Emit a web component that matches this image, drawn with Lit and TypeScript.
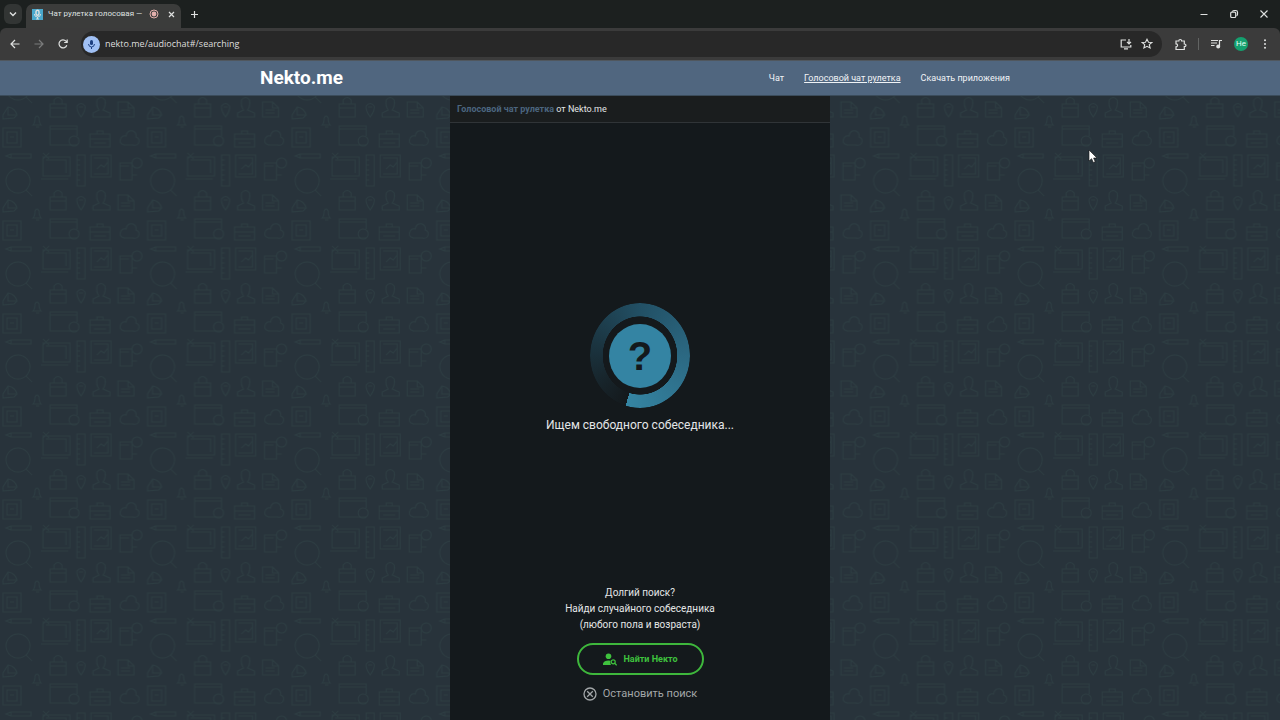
import { LitElement, html, css, svg } from "lit";
import { customElement } from "lit/decorators.js";

@customElement("browser-chrome")
class BrowserChrome extends LitElement {
  static styles = css`
    :host { display: block; background: #1c201f; font-family: Roboto, "Noto Sans", sans-serif; color: #dfe1e0; }
    button { appearance: none; border: 0; padding: 0; margin: 0; background: none; color: inherit; font: inherit; display: grid; place-items: center; }
    svg { display: block; fill: none; stroke: currentColor; stroke-width: 1.4; }
    .strip { display: flex; align-items: flex-end; height: 28px; }
    .search { width: 18px; height: 20px; margin: 0 4px 4px; background: #323534; border-radius: 6px; }
    .tab { display: flex; align-items: center; width: 155px; height: 24px; box-sizing: border-box; padding: 0 6px 4px 6px; background: #3b3c3b; border-radius: 7px 7px 0 0; }
    .fav { width: 11px; height: 11px; background: #4aa8cc; margin-right: 5px; }
    .name { flex: 1; min-width: 0; font-size: 8px; line-height: 12px; white-space: nowrap; }
    .rec { margin: 0 9px 0 4px; color: #e3b0ac; }
    .plus { margin: 0 0 9px 9px; }
    .controls { display: flex; gap: 20px; margin: 0 11px 9px auto; }
    .bar { display: flex; align-items: center; height: 33px; background: #3b3b3b; padding: 0 9px; border-radius: 6px 6px 0 0; border-bottom: 1px solid #50575e; box-sizing: border-box; }
    .nav { display: flex; gap: 12px; margin-right: 12px; }
    .dim { color: #7b7c7c; }
    .omni { flex: 1; display: flex; align-items: center; gap: 5px; height: 26px; padding: 0 9px 0 2px; border-radius: 13px; background: #282828; min-width: 0; }
    .mic { width: 17px; height: 17px; border-radius: 50%; background: #a0c0f4; color: #1d3f80; }
    .url { flex: 1; min-width: 0; border: 0; outline: 0; padding: 0; background: none; color: #dedede; font: 9px/16px "Open Sans", sans-serif; }
    .icons { display: flex; gap: 9px; }
    .right { display: flex; align-items: center; gap: 11px; margin-left: 12px; }
    .sep { width: 1px; height: 12px; background: #626463; }
    .avatar { width: 14px; height: 14px; border-radius: 50%; background: #14a06f; color: #e5fff5; font-size: 8px; line-height: 14px; }
  `;
  render() {
    return html`
      <div class="strip">
        <button class="search" aria-label="Search tabs"><svg width="8" height="6" viewBox="0 0 8 6"><path d="M1 1.5 4 4.5 7 1.5" /></svg></button>
        <div class="tab" role="tab" aria-selected="true">
          <span class="fav"><svg width="11" height="11" viewBox="0 0 11 11" stroke="#d8f4fc"><rect x="4" y="1.2" width="3" height="5" rx="1.5" /><path d="M2.3 5q.3 3 3.2 3t3.2-3M5.5 8v2M4 10h3" stroke-width=".9" /></svg></span>
          <span class="name">Чат рулетка голосовая —</span>
          <svg class="rec" width="10" height="10" viewBox="0 0 10 10"><circle cx="5" cy="5" r="4" stroke-width="1" /><circle cx="5" cy="5" r="2.4" fill="currentColor" stroke="none" /></svg>
          <button aria-label="Close tab"><svg width="7" height="7" viewBox="0 0 7 7"><path d="m1 1 5 5M6 1 1 6" stroke-width="1.2" /></svg></button>
        </div>
        <button class="plus" aria-label="New tab"><svg width="9" height="9" viewBox="0 0 9 9"><path d="M4.5 1v7M1 4.5h7" stroke-width="1.2" /></svg></button>
        <div class="controls">
          <button aria-label="Minimize"><svg width="10" height="10" viewBox="0 0 10 10"><path d="M1.500 5.500h7" stroke-width="1" /></svg></button>
          <button aria-label="Restore"><svg width="10" height="10" viewBox="0 0 10 10"><rect x="1.7" y="3.2" width="5" height="5.3" rx="1" stroke-width="1.2" /><path d="M3.5 2.7q0-1.2 1.5-1.2h1.8q1.7 0 1.7 1.7v2q0 1.2-1 1.6" stroke-width="1.2" /></svg></button>
          <button aria-label="Close window"><svg width="10" height="10" viewBox="0 0 10 10"><path d="m1.500 1.500 7 7M8.500 1.500l-7 7" stroke-width="1.1" /></svg></button>
        </div>
      </div>
      <div class="bar">
        <div class="nav">
          <button aria-label="Back"><svg width="12" height="12" viewBox="0 0 12 12"><path d="M10.500 6H2.200M6 2 2 6l4 4" stroke-width="1.2" /></svg></button>
          <button class="dim" aria-label="Forward"><svg width="12" height="12" viewBox="0 0 12 12"><path d="M1.500 6h8.300M6 2l4 4-4 4" stroke-width="1.2" /></svg></button>
          <button aria-label="Reload"><svg width="12" height="12" viewBox="0 0 12 12"><path d="M9.800 7.200A4 4 0 1 1 9 3.200L10 4.300M10.200 1.500v3h-3" stroke-width="1.2" /></svg></button>
        </div>
        <div class="omni">
          <button class="mic" aria-label="Microphone in use"><svg width="11" height="11" viewBox="0 0 11 11"><rect x="4" y="1" width="3" height="5" rx="1.500" fill="currentColor" stroke="none" /><path d="M2.500 5q.3 3 3 3t3-3M5.500 8v2" stroke-width="1" /></svg></button>
          <input class="url" aria-label="Address" value="nekto.me/audiochat#/searching" />
          <div class="icons">
            <button aria-label="Install"><svg width="12" height="12" viewBox="0 0 12 12"><path d="M6 2H1.200v7h9.600V7M4 10.800h4M9 1v4.500M7 3.800l2 2 2-2" stroke-width="1.200" /></svg></button>
            <button aria-label="Bookmark"><svg width="12" height="12" viewBox="0 0 12 12"><path d="m6 1.200 1.500 3 3.300.3-2.500 2.200.8 3.300L6 8.300 2.900 10l.8-3.300L1.200 4.500l3.300-.3z" stroke-width="1.100" /></svg></button>
          </div>
        </div>
        <div class="right">
          <button aria-label="Extensions"><svg width="13" height="13" viewBox="0 0 13 13"><path d="M2 3h2.800q0-1.500 1.400-1.500T7.600 3h2.700v3q1.700 0 1.700 1.300T10.300 8.600v2.900H2V8.800q1.600 0 1.600-1.500T2 5.800z" stroke-width="1.200" /></svg></button>
          <span class="sep"></span>
          <button aria-label="Media"><svg width="13" height="12" viewBox="0 0 13 12"><path d="M1 2.500h7M1 5h6M1 7.500h3.500M9.500 8.500V2.500H12" stroke-width="1.200" /><circle cx="8.200" cy="8.500" r="1.300" fill="currentColor" /></svg></button>
          <button class="avatar" aria-label="Profile">He</button>
          <button aria-label="Menu"><svg width="12" height="12" viewBox="0 0 12 12"><g fill="currentColor" stroke="none"><circle cx="6" cy="2.200" r="1" /><circle cx="6" cy="6" r="1" /><circle cx="6" cy="9.800" r="1" /></g></svg></button>
        </div>
      </div>`;
  }
}

const doodles = svg`
  <path d="M3 23V19L8 11Q15 12 17 19L14 22zM8 11v8h8" />
  <path d="M33 29q2-2 2-7 2-4 4 0 0 5 2 7zM36 31h3" />
  <path d="M50 8h16v13H50zM54 8V4q4-5 8 0v4M50 12h16" />
  <path d="M81 21q-5-7-4-11 4-5 8 0 1 4-4 11zM79 11h4" />
  <path d="M93 21v-4l6-3q-3-4-2-10 4-5 8 0 1 6-2 10l7 3v4z" />
  <path d="M118 6h10l6 6v9h-16zM128 6v6h6M121 14h9M121 17h9" />
  <path d="M3 32h18v19H3zM7 36h10v11H7zM10 41h4" />
  <path d="M77 40V30H50v19h19M50 33h27M50 49h27" /><circle cx="74" cy="45" r="5" />
  <path d="M90 38h20v13H90zM97 38v-3h6v3M90 43h20M94 47h12" />
  <path d="M124 49q-6-2-3-7 2-3 5-2 1-6 7-5 4 2 3 6 5 2 2 7-2 2-5 1z" />
  <path d="M6 60l5-2h20v4H11zM11 58v4" />
  <path d="M43 61h27v19H43zM41 83h27M46 64h20v13M43 57l6 6M49 57l-6 6" />
  <path d="M77 59h8v31h-8zM77 64h3M77 69h3M77 74h3M77 79h3M77 84h3" />
  <path d="M91 59h20v22H91zM94 62h14v16H94M97 73l4-4 3 2 4-5" />
  <path d="M120 67h12v17h-12zM120 70h9M132 79h5" /><circle cx="137" cy="67" r="5" />
  <circle cx="18" cy="85" r="12" /><path d="M26 94l6 6" />
  <g transform="translate(0 -93)"><circle cx="18" cy="85" r="12" /><path d="M26 94l6 6" /></g>`;

@customElement("app-root")
class AppRoot extends LitElement {
  static styles = css`
    :host { display: flex; flex-direction: column; min-height: 100vh; position: relative; font-family: Roboto, "Noto Sans", sans-serif; color: #e4e6e7; }
    a { color: inherit; text-decoration: none; }
    .top { background: #50667f; }
    .inner { display: flex; align-items: center; justify-content: space-between; max-width: 760px; height: 34px; margin: 0 auto; }
    .logo { font-size: 19px; line-height: 24px; font-weight: 700; color: #fff; }
    .menu { display: flex; gap: 20px; padding-right: 10px; font-size: 9px; line-height: 14px; color: #f0f3f6; }
    .menu .on { text-decoration: underline; }
    .stage { flex: 1; display: grid; grid-template-columns: 1fr minmax(0, 380px) 1fr; background: #28333b; border-top: 1px solid #3b4c5b; }
    .paper { grid-area: 1 / 1 / 2 / 4; width: 100%; height: 100%; min-height: 0; contain: size; }
    .panel { grid-area: 1 / 2 / 2 / 3; display: flex; flex-direction: column; background: #14191c; z-index: 1; }
    .title { margin: 0; padding: 0 7px; font-size: 9px; line-height: 26px; font-weight: 400; background: #1a1d1e; border-bottom: 1px solid #303437; }
    .title a { color: #4b657f; font-weight: 700; }
    .wait { flex: 1; display: flex; flex-direction: column; align-items: center; justify-content: center; gap: 7px; padding-top: 30px; font-size: 12px; line-height: 20px; }
    .wait p, .hint { margin: 0; }
    .spin { display: grid; place-items: center; width: 100px; height: 105px; }
    .ring, .disc { grid-area: 1 / 1; }
    .ring { width: 100%; height: 100%; border-radius: 50%; background: conic-gradient(from 196deg, #14191c 0deg, #172329 35deg, #1b3541 90deg, #225065 165deg, #2c6a84 260deg, #3585a3 360deg); -webkit-mask: radial-gradient(closest-side, transparent 74%, #000 75%); mask: radial-gradient(closest-side, transparent 74%, #000 75%); }
    .disc { display: grid; place-items: center; width: 62px; height: 64px; border-radius: 50%; background: #3484a3; color: #14191c; font: 700 40px/64px "Liberation Sans", sans-serif; }
    .foot { display: flex; flex-direction: column; align-items: center; padding-bottom: 17px; }
    .hint { text-align: center; font-size: 10px; line-height: 16px; margin-bottom: 10px; }
    .find, .stop { appearance: none; background: none; display: flex; align-items: center; justify-content: center; font-family: inherit; }
    .find { width: 127px; height: 32px; gap: 7px; border: 2px solid #3eb73c; border-radius: 16px; color: #3fc23e; font-size: 9px; font-weight: 700; }
    .stop { border: 0; padding: 0; gap: 6px; margin-top: 10px; font-size: 11px; line-height: 18px; color: #a3a7a9; }
    .pointer { position: absolute; left: 1088px; top: 149px; z-index: 2; }
  `;
  render() {
    return html`
      <browser-chrome></browser-chrome>
      <header class="top"><div class="inner">
        <a class="logo" href="#">Nekto.me</a>
        <nav class="menu"><a href="#chat">Чат</a><a class="on" href="#voice">Голосовой чат рулетка</a><a href="#apps">Скачать приложения</a></nav>
      </div></header>
      <main class="stage">
        <svg class="paper" aria-hidden="true">
          <defs><pattern id="doodle" width="144.6" height="93" patternUnits="userSpaceOnUse">
            <g fill="none" stroke="#2d3d42" stroke-width="1">${doodles}</g>
          </pattern></defs>
          <rect width="100%" height="100%" fill="url(#doodle)" />
        </svg>
        <section class="panel">
          <h1 class="title"><a href="#voice">Голосовой чат рулетка</a> от Nekto.me</h1>
          <div class="wait">
            <div class="spin"><div class="ring"></div><div class="disc">?</div></div>
            <p>Ищем свободного собеседника...</p>
          </div>
          <div class="foot">
            <p class="hint">Долгий поиск?<br />Найди случайного собеседника<br />(любого пола и возраста)</p>
            <button class="find"><svg width="14" height="13" viewBox="0 0 14 13"><circle cx="5.500" cy="3.200" r="2.800" fill="currentColor" /><path d="M0 12V10.500Q1 7.500 5.500 7.500q1.300 0 2 .3Q6.800 10 8 12z" fill="currentColor" /><circle cx="10.200" cy="8.800" r="2" fill="none" stroke="currentColor" stroke-width="1.200" /><path d="m11.700 10.300 2 2" stroke="currentColor" stroke-width="1.300" /></svg>Найти Некто</button>
            <button class="stop"><svg width="14" height="14" viewBox="0 0 14 14" fill="none" stroke="currentColor" stroke-width="1.300"><circle cx="7" cy="7" r="6" /><path d="m4.200 4.200 5.600 5.600M9.800 4.200 4.200 9.800" /></svg>Остановить поиск</button>
          </div>
        </section>
      </main>
      <svg class="pointer" width="10" height="15" viewBox="0 0 10 15" aria-hidden="true"><path d="M1 1v11l2.600-2.300L5.300 13.500l1.900-.8L5.600 9H9z" fill="#fff" stroke="#111" stroke-width=".6" /></svg>`;
  }
}
